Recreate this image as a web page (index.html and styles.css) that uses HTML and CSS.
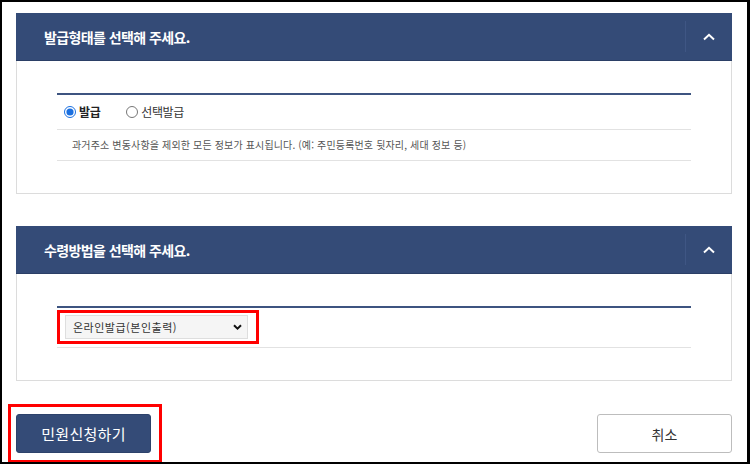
FILE: index.html
```html
<!DOCTYPE html>
<html lang="ko">
<head>
<meta charset="utf-8">
<title>민원신청</title>
<link rel="stylesheet" href="styles.css">
</head>
<body>
<div class="frame">
  <section class="panel">
    <div class="panel-head">
      <h2 class="panel-title">발급형태를 선택해 주세요.</h2>
      <button class="toggle" type="button" aria-label="접기">
        <svg width="12" height="8" viewBox="0 0 12 8"><path d="M1 6.5 L6 1.8 L11 6.5" fill="none" stroke="#fff" stroke-width="2"/></svg>
      </button>
    </div>
    <div class="panel-body">
      <div class="table">
        <div class="row radio-row">
          <label class="radio"><input type="radio" name="kind" checked><span class="radio-text strong">발급</span></label>
          <label class="radio"><input type="radio" name="kind"><span class="radio-text">선택발급</span></label>
        </div>
        <div class="row desc-row">과거주소 변동사항을 제외한 모든 정보가 표시됩니다. (예: 주민등록번호 뒷자리, 세대 정보 등)</div>
      </div>
    </div>
  </section>

  <section class="panel">
    <div class="panel-head">
      <h2 class="panel-title">수령방법을 선택해 주세요.</h2>
      <button class="toggle" type="button" aria-label="접기">
        <svg width="12" height="8" viewBox="0 0 12 8"><path d="M1 6.5 L6 1.8 L11 6.5" fill="none" stroke="#fff" stroke-width="2"/></svg>
      </button>
    </div>
    <div class="panel-body">
      <div class="table">
        <div class="row select-row">
          <div class="mark select-mark">
            <div class="select-wrap">
              <select class="select">
                <option>온라인발급(본인출력)</option>
              </select>
              <svg class="select-arrow" width="9" height="6" viewBox="0 0 9 6"><path d="M1 1.2 L4.5 4.6 L8 1.2" fill="none" stroke="#111" stroke-width="2"/></svg>
            </div>
          </div>
        </div>
      </div>
    </div>
  </section>

  <div class="actions">
    <div class="mark btn-mark">
      <button class="btn btn-primary" type="button">민원신청하기</button>
    </div>
    <button class="btn btn-cancel" type="button">취소</button>
  </div>
</div>
</body>
</html>
```

FILE: styles.css
```css
html, body {
  margin: 0;
  padding: 0;
  background: #fff;
}

body {
  font-family: "Noto Sans CJK KR", "Noto Sans", sans-serif;
  color: #333;
}

.frame {
  box-sizing: border-box;
  width: 750px;
  height: 464px;
  border: 2px solid #000;
  border-right-width: 3px;
  padding: 11px 15px 0 14px;
  overflow: hidden;
}

.panel {
  margin-bottom: 32px;
}

.panel-head {
  box-sizing: border-box;
  height: 48px;
  background: #344b77;
  border-bottom: 1px solid #2b3f66;
  display: flex;
  align-items: center;
  justify-content: space-between;
}

.panel-title {
  margin: 0;
  padding-left: 28px;
  font-size: 14px;
  font-weight: 700;
  letter-spacing: -0.6px;
  line-height: 20px;
  color: #fff;
}

.toggle {
  box-sizing: border-box;
  width: 47px;
  height: 31px;
  padding: 0;
  margin: 0;
  background: transparent;
  border: 0;
  border-left: 1px solid #3f5684;
  display: flex;
  align-items: center;
  justify-content: center;
  cursor: pointer;
}

.panel-body {
  border: 1px solid #dcdcdc;
  border-top: 0;
  padding: 32px 40px 32px 40px;
}

.table {
  border-top: 2px solid #3d5480;
}

.row {
  border-bottom: 1px solid #e2e2e2;
  display: flex;
  align-items: center;
}

.radio-row {
  height: 34px;
  padding-left: 7px;
}

.radio {
  display: flex;
  align-items: center;
  margin-right: 26px;
  cursor: pointer;
}

.radio input {
  width: 12px;
  height: 12px;
  margin: 0 3px 0 0;
  accent-color: #1a6fe0;
}

.radio-text {
  font-size: 12px;
  line-height: 16px;
  letter-spacing: -0.4px;
  color: #333;
}

.radio-text.strong {
  font-weight: 700;
  color: #222;
}

.desc-row {
  height: 30px;
  padding-left: 15px;
  font-size: 10px;
  letter-spacing: 0.15px;
  line-height: 14px;
  color: #555;
}

.select-row {
  height: 39px;
  align-items: flex-start;
}

.mark {
  border: 3px solid #ff0000;
  box-sizing: border-box;
}

.select-mark {
  margin-top: 2px;
  padding: 2px 8px 2px 5px;
  display: flex;
}

.select-wrap {
  position: relative;
  display: flex;
}

.select {
  -webkit-appearance: none;
  appearance: none;
  box-sizing: border-box;
  width: 183px;
  height: 24px;
  margin: 0;
  padding: 0 20px 0 7px;
  background: #f5f5f5;
  border: 1px solid #dedede;
  border-radius: 0;
  font-family: "Noto Sans CJK KR", "Noto Sans", sans-serif;
  font-size: 11px;
  letter-spacing: 0.5px;
  color: #333;
}

.select-arrow {
  position: absolute;
  right: 6px;
  top: 9px;
  pointer-events: none;
}

.actions {
  margin-top: -9px;
  margin-left: -8px;
  display: flex;
  align-items: center;
  justify-content: space-between;
}

.btn-mark {
  padding: 7px 8px 7px 5px;
  display: flex;
}

.btn {
  box-sizing: border-box;
  width: 135px;
  height: 39px;
  border-radius: 3px;
  font-family: "Noto Sans CJK KR", "Noto Sans", sans-serif;
  cursor: pointer;
}

.btn-primary {
  background: #344b77;
  border: 1px solid #2d426b;
  color: #fff;
  font-size: 15px;
  letter-spacing: 0.3px;
}

.btn-cancel {
  background: #fff;
  border: 1px solid #bdbdbd;
  color: #333;
  font-size: 14px;
}
```
